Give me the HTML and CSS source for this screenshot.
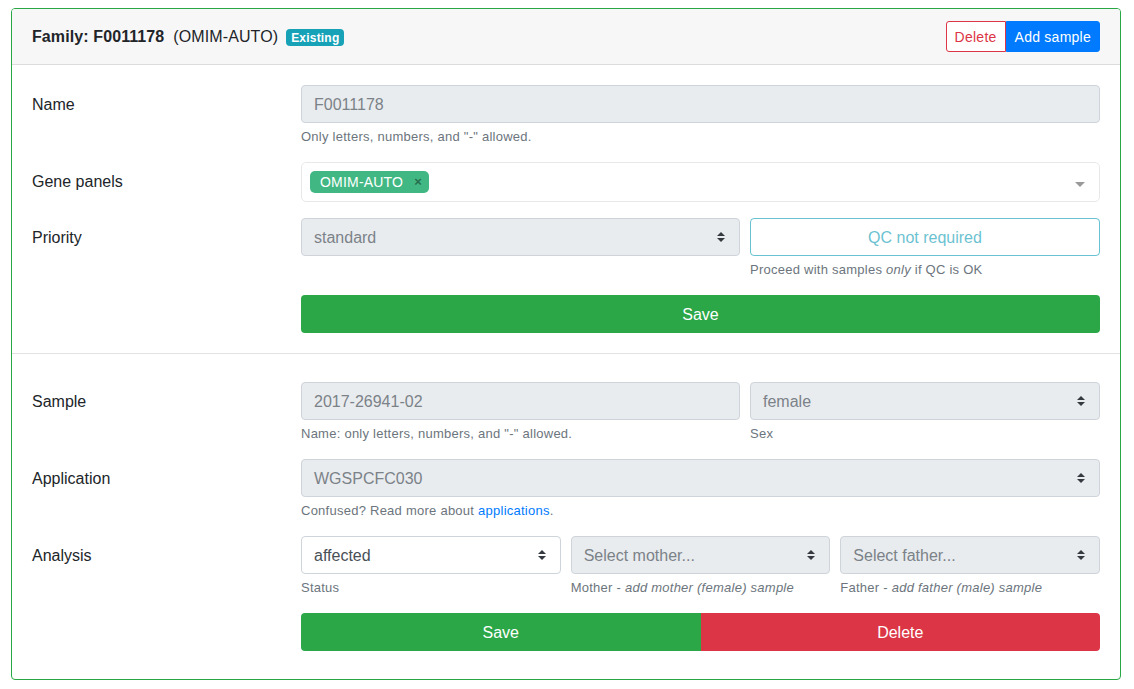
FILE: index.html
```html
<!DOCTYPE html>
<html>
<head>
<meta charset="utf-8">
<link rel="stylesheet" href="styles.css">
</head>
<body>
<div class="card">
  <div class="card-header">
    <div class="title">
      <strong>Family: F0011178</strong>
      <span class="panel">(OMIM-AUTO)</span>
      <span class="badge">Existing</span>
    </div>
    <div class="btn-group-sm">
      <button class="btn-sm btn-outline-danger">Delete</button>
      <button class="btn-sm btn-primary">Add sample</button>
    </div>
  </div>

  <div class="section section-family">
    <div class="form-row">
      <div class="label">Name</div>
      <div class="field">
        <div class="input disabled">F0011178</div>
        <div class="help">Only letters, numbers, and "-" allowed.</div>
      </div>
    </div>
    <div class="form-row">
      <div class="label label-ms">Gene panels</div>
      <div class="field">
        <div class="multiselect">
          <div class="tags">
            <span class="tag">OMIM-AUTO<span class="tag-x">×</span></span>
          </div>
          <span class="caret"></span>
        </div>
      </div>
    </div>
    <div class="form-row">
      <div class="label">Priority</div>
      <div class="field split">
        <div class="col-wide">
          <div class="select disabled"><span>standard</span><svg class="arrows" viewBox="0 0 4 5" width="8" height="10"><path d="M2 0L0 2h4zm0 5L0 3h4z" fill="#343a40"/></svg></div>
        </div>
        <div class="col-rest">
          <div class="btn-qc">QC not required</div>
          <div class="help">Proceed with samples <em>only</em> if QC is OK</div>
        </div>
      </div>
    </div>
    <div class="form-row last">
      <div class="label"></div>
      <div class="field">
        <div class="btn btn-success">Save</div>
      </div>
    </div>
  </div>

  <div class="section section-sample">
    <div class="form-row">
      <div class="label">Sample</div>
      <div class="field split">
        <div class="col-wide">
          <div class="input disabled">2017-26941-02</div>
          <div class="help">Name: only letters, numbers, and "-" allowed.</div>
        </div>
        <div class="col-rest">
          <div class="select disabled"><span>female</span><svg class="arrows" viewBox="0 0 4 5" width="8" height="10"><path d="M2 0L0 2h4zm0 5L0 3h4z" fill="#343a40"/></svg></div>
          <div class="help">Sex</div>
        </div>
      </div>
    </div>
    <div class="form-row">
      <div class="label">Application</div>
      <div class="field">
        <div class="select disabled"><span>WGSPCFC030</span><svg class="arrows" viewBox="0 0 4 5" width="8" height="10"><path d="M2 0L0 2h4zm0 5L0 3h4z" fill="#343a40"/></svg></div>
        <div class="help">Confused? Read more about <a href="#">applications</a>.</div>
      </div>
    </div>
    <div class="form-row">
      <div class="label">Analysis</div>
      <div class="field triple">
        <div>
          <div class="select"><span>affected</span><svg class="arrows" viewBox="0 0 4 5" width="8" height="10"><path d="M2 0L0 2h4zm0 5L0 3h4z" fill="#343a40"/></svg></div>
          <div class="help">Status</div>
        </div>
        <div>
          <div class="select disabled"><span>Select mother...</span><svg class="arrows" viewBox="0 0 4 5" width="8" height="10"><path d="M2 0L0 2h4zm0 5L0 3h4z" fill="#343a40"/></svg></div>
          <div class="help">Mother - <em>add mother (female) sample</em></div>
        </div>
        <div>
          <div class="select disabled"><span>Select father...</span><svg class="arrows" viewBox="0 0 4 5" width="8" height="10"><path d="M2 0L0 2h4zm0 5L0 3h4z" fill="#343a40"/></svg></div>
          <div class="help">Father - <em>add father (male) sample</em></div>
        </div>
      </div>
    </div>
    <div class="form-row last">
      <div class="label"></div>
      <div class="field btn-pair">
        <div class="btn btn-success left">Save</div>
        <div class="btn btn-danger right">Delete</div>
      </div>
    </div>
  </div>
</div>
</body>
</html>
```

FILE: styles.css
```css
* { box-sizing: border-box; }
html, body { background: #fff; }
body {
  margin: 8px 13px 8px 11px;
  font-family: "Liberation Sans", Arial, sans-serif;
  font-size: 16px;
  line-height: 1.5;
  color: #212529;
}
.card {
  border: 1px solid #28a745;
  border-radius: 4px;
  overflow: hidden;
}
.card-header {
  display: flex;
  justify-content: space-between;
  align-items: center;
  padding: 12px 20px;
  background: #f7f7f7;
  border-bottom: 1px solid #dcdcdc;
}
.title { display: flex; align-items: center; padding-top: 1px; }
.title strong { font-weight: 700; letter-spacing: 0.1px; }
.panel { margin-left: 9px; letter-spacing: 0.1px; }
.badge {
  margin-left: 8px;
  background: #17a2b8;
  color: #fff;
  font-size: 12px;
  font-weight: 700;
  line-height: 1;
  padding: 3px 5px 2px;
  letter-spacing: 0.2px;
  border-radius: 4px;
}
.btn-group-sm { display: flex; }
.btn-sm {
  font-family: inherit;
  font-size: 14px;
  line-height: 21px;
  padding: 5px 8px 3px;
  border: 1px solid transparent;
  margin: 0;
  letter-spacing: 0.25px;
}
.btn-outline-danger {
  color: #dc3545;
  background: #fff;
  border-color: #dc3545;
  border-radius: 3px 0 0 3px;
}
.btn-primary {
  color: #fff;
  background: #007bff;
  border-color: #007bff;
  border-radius: 0 3px 3px 0;
}
.section { padding: 20px; }
.section-family { border-bottom: 1px solid #e2e2e2; }
.section-sample { padding: 28px 20px 28px; }
.form-row { display: flex; margin-bottom: 16px; }
.form-row.last { margin-bottom: 0; }
.label {
  flex: 0 0 269px;
  padding-top: 8px;
  line-height: 24px;
}
.label-ms { padding-top: 8px; }
.field { flex: 1; min-width: 0; }
.input, .select {
  height: 38px;
  padding: 7px 12px 5px;
  line-height: 24px;
  border: 1px solid #ced4da;
  border-radius: 4px;
  color: #495057;
  background: #fff;
}
.disabled { background: #e9ecef; color: #7b8288; }
.select {
  display: flex;
  align-items: center;
  justify-content: space-between;
  padding: 7px 14px 5px 12px;
}
.arrows { flex: none; display: block; margin-top: -2px; }
.help {
  margin-top: 4px;
  font-size: 13px;
  line-height: 19px;
  letter-spacing: 0.25px;
  color: #6c757d;
}
.help a { color: #007bff; text-decoration: none; }
.multiselect {
  position: relative;
  min-height: 40px;
  border: 1px solid #e8e8e8;
  border-radius: 5px;
  background: #fff;
  padding: 8px 40px 0 8px;
}
.tags { display: flex; }
.tag {
  position: relative;
  display: inline-block;
  background: #41b883;
  color: #fff;
  font-size: 14px;
  line-height: 14px;
  padding: 4px 26px 4px 10px;
  letter-spacing: 0.2px;
  border-radius: 5px;
  margin-bottom: 5px;
}
.tag-x {
  position: absolute;
  right: 0;
  top: 0;
  width: 22px;
  text-align: center;
  line-height: 22px;
  font-size: 13px;
  font-weight: 700;
  color: #266d4d;
}
.caret {
  position: absolute;
  right: 14px;
  top: 19px;
  width: 0;
  height: 0;
  border-left: 5px solid transparent;
  border-right: 5px solid transparent;
  border-top: 5px solid #999;
}
.split { display: flex; gap: 10px; }
.col-wide { flex: 0 0 439px; }
.col-rest { flex: 1; min-width: 0; }
.btn-qc {
  height: 38px;
  border: 1px solid #17a2b8;
  border-radius: 4px;
  color: #17a2b8;
  text-align: center;
  line-height: 24px;
  padding: 7px 12px 5px;
  opacity: 0.65;
}
.triple {
  display: grid;
  grid-template-columns: 1fr 1fr 1fr;
  gap: 10px;
}
.btn {
  height: 38px;
  line-height: 24px;
  padding: 8px 12px 4px;
  text-align: center;
  color: #fff;
  border-radius: 4px;
}
.btn-success { background: #2ba748; }
.btn-danger { background: #dc3545; }
.btn-pair { display: flex; }
.btn-pair .btn { flex: 1; }
.btn-pair .left { border-radius: 4px 0 0 4px; }
.btn-pair .right { border-radius: 0 4px 4px 0; }
```
